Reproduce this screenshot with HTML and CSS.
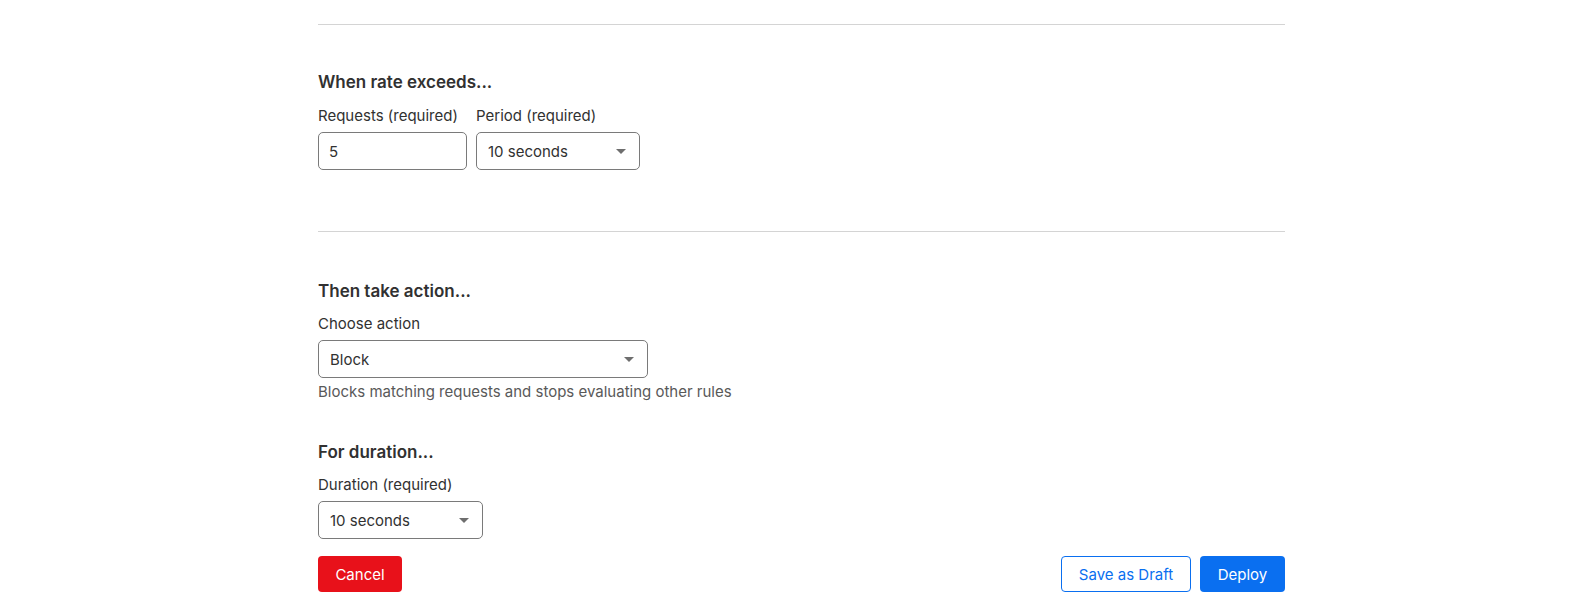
FILE: index.html
```html
<!DOCTYPE html>
<html lang="en">
<head>
<meta charset="utf-8">
<title>Rate limiting rule</title>
<link rel="stylesheet" href="styles.css">
</head>
<body>
<div class="page">
  <div class="form">
    <hr class="divider">
    <section class="section first">
      <h3 class="heading">When rate exceeds...</h3>
      <div class="row">
        <div class="field">
          <label class="label">Requests (required)</label>
          <div class="input w-requests">5</div>
        </div>
        <div class="field">
          <label class="label">Period (required)</label>
          <div class="input select w-period"><span>10 seconds</span><span class="caret"></span></div>
        </div>
      </div>
    </section>
    <hr class="divider second">
    <section class="section action">
      <h3 class="heading">Then take action...</h3>
      <div class="field">
        <label class="label">Choose action</label>
        <div class="input select w-action"><span>Block</span><span class="caret"></span></div>
        <p class="help">Blocks matching requests and stops evaluating other rules</p>
      </div>
      <h3 class="heading h-duration">For duration...</h3>
      <div class="field">
        <label class="label">Duration (required)</label>
        <div class="input select w-duration"><span>10 seconds</span><span class="caret"></span></div>
      </div>
    </section>
    <div class="actions">
      <button class="btn btn-danger">Cancel</button>
      <div class="right">
        <button class="btn btn-outline">Save as Draft</button>
        <button class="btn btn-primary">Deploy</button>
      </div>
    </div>
  </div>
</div>
</body>
</html>
```
FILE: styles.css
```css
* { box-sizing: border-box; }
html, body { margin: 0; padding: 0; background: #fff; }
body {
  font-family: Inter, "Noto Sans", "Liberation Sans", sans-serif;
  color: #313131;
}
.page {
  padding-left: 318px;
  padding-top: 24px;
}
.form { width: 967px; }
.divider {
  margin: 0;
  border: 0;
  border-top: 1px solid #d4d4d4;
}
.divider.second { margin-top: 61px; }
.section { padding-top: 45px; }
.section.action { padding-top: 47px; }
.heading {
  margin: 0;
  font-size: 17px;
  line-height: 24px;
  font-weight: 600;
  color: #313131;
}
.row { display: flex; gap: 9px; margin-top: 12px; }
.section .field { display: flex; flex-direction: column; }
.section > .field { margin-top: 11px; }
.label {
  font-size: 15px;
  line-height: 20px;
  color: #313131;
  margin-bottom: 6px;
}
.input {
  height: 38px;
  border: 1px solid #7a7a7a;
  border-radius: 5px;
  font-size: 15px;
  display: flex;
  align-items: center;
  padding: 0 10px 0 10px;
  color: #313131;
}
.select { justify-content: space-between; padding-left: 11px; padding-right: 13px; }
.caret {
  width: 0; height: 0;
  border-left: 5px solid transparent;
  border-right: 5px solid transparent;
  border-top: 5px solid #6e6e6e;
}
.w-requests { width: 149px; }
.w-period { width: 164px; }
.w-action { width: 330px; }
.w-duration { width: 165px; }
.help {
  margin: 4px 0 0;
  font-size: 15px;
  line-height: 20px;
  color: #595959;
}
.h-duration { margin-top: 38px; }
.actions {
  display: flex;
  justify-content: space-between;
  margin-top: 17px;
}
.right { display: flex; gap: 9px; }
.btn {
  height: 36px;
  font-family: inherit;
  font-size: 15px;
  border-radius: 4px;
  padding: 0 8px;
  border: 1px solid transparent;
  white-space: nowrap;
  cursor: pointer;
}
.btn-danger { background: #e8111a; color: #fff; width: 84px; }
.btn-outline { background: #fff; color: #0a6ff0; border-color: #0a6ff0; width: 130px; }
.btn-primary { background: #0a6ff0; color: #fff; width: 85px; }
```
